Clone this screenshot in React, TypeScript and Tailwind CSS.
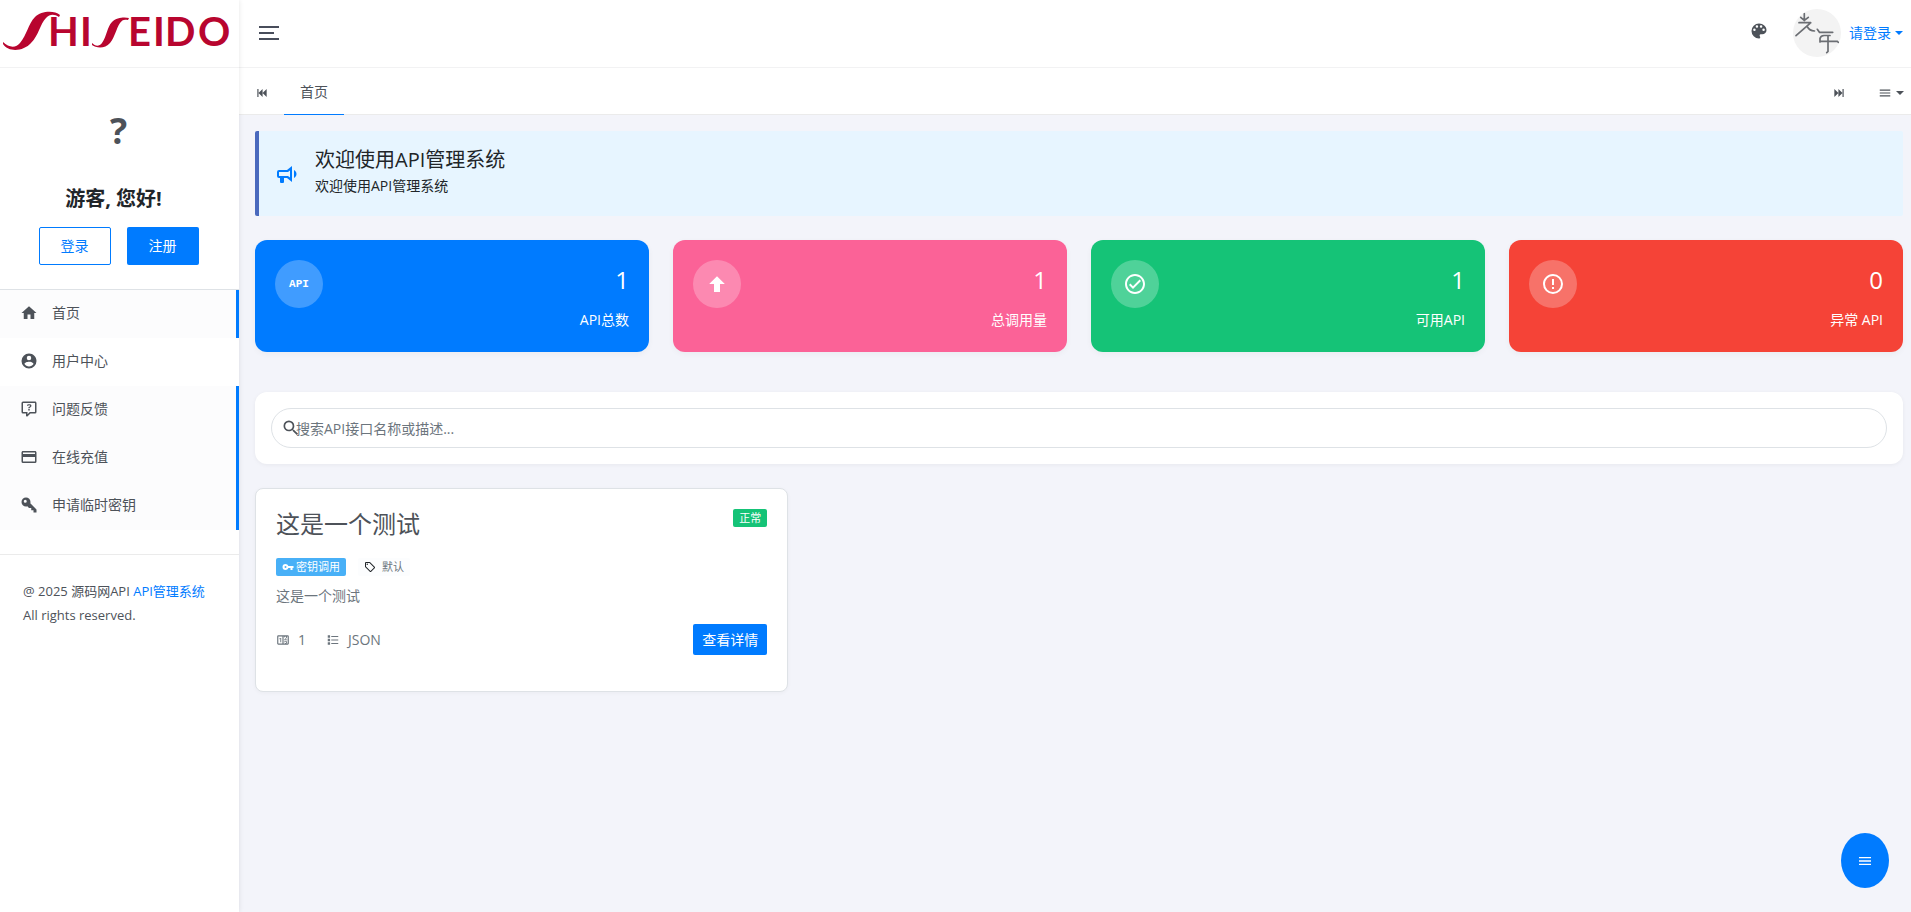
import React, { useState } from 'react';
import clsx from 'clsx';

type IconProps = {
  path: string;
  className?: string;
};

type MenuItem = {
  label: string;
  href: string;
  icon: string;
  highlighted: boolean;
};

type Stat = {
  label: string;
  value: number;
  color: string;
  icon?: string;
};

type ApiItem = {
  name: string;
  description: string;
  status: string;
  auth: string;
  category: string;
  calls: number;
  format: string;
};

const icons = {
  home: 'M10,20V14H14V20H19V12H22L12,3L2,12H5V20H10Z',
  account:
    'M12,19.2C9.5,19.2 7.29,17.92 6,16C6.03,14 10,12.9 12,12.9C14,12.9 17.97,14 18,16C16.71,17.92 14.5,19.2 12,19.2M12,5A3,3 0 0,1 15,8A3,3 0 0,1 12,11A3,3 0 0,1 9,8A3,3 0 0,1 12,5M12,2A10,10 0 0,0 2,12A10,10 0 0,0 12,22A10,10 0 0,0 22,12C22,6.47 17.5,2 12,2Z',
  question:
    'M4,2A2,2 0 0,0 2,4V16A2,2 0 0,0 4,18H8V21A1,1 0 0,0 9,22H9.5V22C9.75,22 10,21.9 10.2,21.71L13.9,18H20A2,2 0 0,0 22,16V4C22,2.89 21.1,2 20,2H4M4,4H20V16H13.08L10,19.08V16H4V4M12.19,5.5C11.3,5.5 10.59,5.68 10.05,6.04C9.5,6.4 9.22,7 9.27,7.69H11.24C11.24,7.41 11.34,7.2 11.5,7.06C11.7,6.92 11.92,6.85 12.19,6.85C12.5,6.85 12.77,6.93 12.95,7.11C13.13,7.28 13.22,7.5 13.22,7.8C13.22,8.08 13.14,8.33 13,8.54C12.83,8.76 12.62,8.94 12.36,9.08C11.84,9.4 11.5,9.68 11.29,9.92C11.1,10.16 11,10.5 11,11H13C13,10.72 13.05,10.5 13.14,10.32C13.23,10.15 13.4,10 13.66,9.85C14.12,9.64 14.5,9.36 14.79,9C15.08,8.63 15.23,8.24 15.23,7.8C15.23,7.1 14.96,6.54 14.42,6.12C13.88,5.71 13.13,5.5 12.19,5.5M11,12V14H13V12H11Z',
  card: 'M20,8H4V6H20M20,18H4V12H20M20,4H4C2.89,4 2,4.89 2,6V18A2,2 0 0,0 4,20H20A2,2 0 0,0 22,18V6C22,4.89 21.1,4 20,4Z',
  key: 'M22,18V22H18V19H15V16H12L9.74,13.74C9.19,13.91 8.61,14 8,14A6,6 0 0,1 2,8A6,6 0 0,1 8,2A6,6 0 0,1 14,8C14,8.61 13.91,9.19 13.74,9.74L22,18M7,5A2,2 0 0,0 5,7A2,2 0 0,0 7,9A2,2 0 0,0 9,7A2,2 0 0,0 7,5Z',
  keyFlat:
    'M7,14A2,2 0 0,1 5,12A2,2 0 0,1 7,10A2,2 0 0,1 9,12A2,2 0 0,1 7,14M12.65,10C11.83,7.67 9.61,6 7,6A6,6 0 0,0 1,12A6,6 0 0,0 7,18C9.61,18 11.83,16.33 12.65,14H17V18H21V14H23V10H12.65Z',
  palette:
    'M17.5,12A1.5,1.5 0 0,1 16,10.5A1.5,1.5 0 0,1 17.5,9A1.5,1.5 0 0,1 19,10.5A1.5,1.5 0 0,1 17.5,12M14.5,8A1.5,1.5 0 0,1 13,6.5A1.5,1.5 0 0,1 14.5,5A1.5,1.5 0 0,1 16,6.5A1.5,1.5 0 0,1 14.5,8M9.5,8A1.5,1.5 0 0,1 8,6.5A1.5,1.5 0 0,1 9.5,5A1.5,1.5 0 0,1 11,6.5A1.5,1.5 0 0,1 9.5,8M6.5,12A1.5,1.5 0 0,1 5,10.5A1.5,1.5 0 0,1 6.5,9A1.5,1.5 0 0,1 8,10.5A1.5,1.5 0 0,1 6.5,12M12,3A9,9 0 0,0 3,12A9,9 0 0,0 12,21A1.5,1.5 0 0,0 13.5,19.5C13.5,19.11 13.35,18.76 13.11,18.5C12.88,18.23 12.73,17.88 12.73,17.5A1.5,1.5 0 0,1 14.23,16H16A5,5 0 0,0 21,11C21,6.58 16.97,3 12,3Z',
  skipBackward: 'M20,5V19L13,12M6,5V19H4V5M13,5V19L6,12',
  skipForward: 'M4,5V19L11,12M18,5V19H20V5M11,5V19L18,12',
  menu: 'M3,6H21V8H3V6M3,11H21V13H3V11M3,16H21V18H3V16Z',
  bullhorn:
    'M12,8H4A2,2 0 0,0 2,10V14A2,2 0 0,0 4,16H5V20A1,1 0 0,0 6,21H8A1,1 0 0,0 9,20V16H12L17,20V4L12,8M15,15.6L13,14H4V10H13L15,8.4V15.6M21.5,12C21.5,13.71 20.54,15.26 19,16V8C20.53,8.75 21.5,10.3 21.5,12Z',
  arrowUp: 'M15,20H9V12H4.16L12,4.16L19.84,12H15V20Z',
  check:
    'M12 2C6.5 2 2 6.5 2 12S6.5 22 12 22 22 17.5 22 12 17.5 2 12 2M12 20C7.59 20 4 16.41 4 12S7.59 4 12 4 20 7.59 20 12 16.41 20 12 20M16.59 7.58L10 14.17L7.41 11.59L6 13L10 17L18 9L16.59 7.58Z',
  alert:
    'M11,15H13V17H11V15M11,7H13V13H11V7M12,2C6.47,2 2,6.5 2,12A10,10 0 0,0 12,22A10,10 0 0,0 22,12A10,10 0 0,0 12,2M12,20A8,8 0 0,1 4,12A8,8 0 0,1 12,4A8,8 0 0,1 20,12A8,8 0 0,1 12,20Z',
  magnify:
    'M9.5,3A6.5,6.5 0 0,1 16,9.5C16,11.11 15.41,12.59 14.44,13.73L14.71,14H15.5L20.5,19L19,20.5L14,15.5V14.71L13.73,14.44C12.59,15.41 11.11,16 9.5,16A6.5,6.5 0 0,1 3,9.5A6.5,6.5 0 0,1 9.5,3M9.5,5C7,5 5,7 5,9.5C5,12 7,14 9.5,14C12,14 14,12 14,9.5C14,7 12,5 9.5,5Z',
  tag: 'M21.41 11.58L12.41 2.58A2 2 0 0 0 11 2H4A2 2 0 0 0 2 4V11A2 2 0 0 0 2.59 12.42L11.59 21.42A2 2 0 0 0 13 22A2 2 0 0 0 14.41 21.41L21.41 14.41A2 2 0 0 0 22 13A2 2 0 0 0 21.41 11.58M13 20L4 11V4H11L20 13M6.5 5A1.5 1.5 0 1 1 5 6.5A1.5 1.5 0 0 1 6.5 5Z',
  counter:
    'M4,4H20A2,2 0 0,1 22,6V18A2,2 0 0,1 20,20H4A2,2 0 0,1 2,18V6A2,2 0 0,1 4,4M4,6V18H11V6H4M20,18V6H18.76C19,6.54 18.95,7.07 18.95,7.13C18.88,7.8 18.41,8.5 18.24,8.75L15.91,11.3L19.23,11.28L19.24,12.5L14.04,12.47L14,11.47C14,11.47 17.05,8.24 17.2,7.95C17.34,7.67 17.91,6 16.5,6C15.27,6.05 15.41,7.3 15.41,7.3L13.87,7.31C13.87,7.31 13.88,6.65 14.25,6H13V18H15.58L15.57,17.14L16.54,17.13C16.54,17.13 17.45,16.97 17.46,16.08C17.5,15.08 16.65,15.08 16.5,15.08C16.37,15.08 15.43,15.13 15.43,15.95H13.91C13.91,15.95 13.95,13.89 16.5,13.89C19.1,13.89 18.96,15.91 18.96,15.91C18.96,15.91 19,17.16 17.85,17.63L18.37,18H20M8.92,16H7.42V10.2L5.62,10.76V9.53L8.76,8.41H8.92V16Z',
  list: 'M3,4H7V8H3V4M9,5V7H21V5H9M3,10H7V14H3V10M9,11V13H21V11H9M3,16H7V20H3V16M9,17V19H21V17H9',
};

const menuItems: MenuItem[] = [
  { label: '首页', href: '#home', icon: icons.home, highlighted: true },
  { label: '用户中心', href: '#user', icon: icons.account, highlighted: false },
  { label: '问题反馈', href: '#feedback', icon: icons.question, highlighted: true },
  { label: '在线充值', href: '#recharge', icon: icons.card, highlighted: true },
  { label: '申请临时密钥', href: '#key', icon: icons.key, highlighted: true },
];

const stats: Stat[] = [
  { label: 'API总数', value: 1, color: 'bg-[#007bff]' },
  { label: '总调用量', value: 1, color: 'bg-[#fb6297]', icon: icons.arrowUp },
  { label: '可用API', value: 1, color: 'bg-[#15c377]', icon: icons.check },
  { label: '异常 API', value: 0, color: 'bg-[#f54337]', icon: icons.alert },
];

const apis: ApiItem[] = [
  {
    name: '这是一个测试',
    description: '这是一个测试',
    status: '正常',
    auth: '密钥调用',
    category: '默认',
    calls: 1,
    format: 'JSON',
  },
];

const Icon: React.FC<IconProps> = ({ path, className = 'size-4' }) => (
  <svg viewBox="0 0 24 24" fill="currentColor" aria-hidden="true" className={clsx('shrink-0', className)}>
    <path d={path} />
  </svg>
);

const Caret = () => (
  <span className="border-x-4 border-t-4 border-x-transparent border-t-current" aria-hidden="true" />
);

const Logo = () => (
  <svg viewBox="0 0 239 67" className="h-[67px] w-full" role="img" aria-label="SHISEIDO">
    <g fill="#b8052f">
      <path d="M3,42 C9,48 16,48 20,43 C27,35 28,24 35,17 C41,11 54,10 60,15 L59,17 C54,14 50,14 46,18 C40,24 39,35 31,43 C24,51 9,53 3,44 Z" />
      <path d="M92,43 C95,46 99,47 102,43 C107,36 107,27 112,22 C117,17 125,17 129,18 L128,20 C124,19 122,20 120,23 C116,29 115,37 110,43 C105,49 96,48 92,45 Z" />
      <g fontFamily="Lato, sans-serif" fontWeight="700" fontSize="40">
        <text x="48" y="46">H</text>
        <text x="80" y="46">I</text>
        <text x="128" y="46">E</text>
        <text x="153" y="46">I</text>
        <text x="165" y="46">D</text>
        <text x="198" y="46">O</text>
      </g>
    </g>
  </svg>
);

const Avatar = () => (
  <svg viewBox="0 0 48 48" className="size-12 rounded-full bg-[#f3f3f3]" aria-hidden="true">
    <g fill="none" stroke="#6b6e73" strokeWidth="1.7" strokeLinecap="round">
      <path d="M11.3,4.5 V11.5 M7.7,8.3 L11.3,11.5 L15.3,8.3 M6,13.7 H17.7 M17,14.3 L3,26.7 M14.5,18 Q16.5,21.8 21.5,22" />
      <path d="M24.3,20.3 L26.5,23.3 H39.7 M27,33 V29.5 Q27.5,26.8 31,26.5 H37 M27,32.3 H44.3 L45.5,33.5 M35,26.5 V42.5 L33.7,43.7" />
    </g>
  </svg>
);

const Sidebar = () => (
  <aside className="z-10 flex w-[239px] shrink-0 flex-col bg-white shadow-[0_0_5px_rgba(0,0,0,0.1)]">
    <a href="#home" className="block border-b border-[#f2f2f3]">
      <Logo />
    </a>

    <div className="flex flex-col items-center border-b border-[#dee2e6] pt-10 pr-0.5 pb-6">
      <span className="text-4xl leading-[46px] font-bold text-[#4d5259]">?</span>
      <h2 className="mt-[33px] mr-2.5 text-xl leading-6 font-bold text-[#212529]">游客, 您好!</h2>
      <div className="mt-4 flex gap-4">
        <button type="button" className="h-[38px] w-[72px] rounded-xs border border-[#007bff] text-sm text-[#007bff]">
          登录
        </button>
        <button type="button" className="h-[38px] w-[72px] rounded-xs bg-[#007bff] text-sm text-white">
          注册
        </button>
      </div>
    </div>

    <nav className="mb-6 flex flex-col">
      {menuItems.map((item) => (
        <a
          key={item.href}
          href={item.href}
          className={clsx(
            'flex h-12 items-center gap-3.5 border-r-3 pb-0.5 pl-5 text-sm',
            item.highlighted ? 'border-[#007bff] bg-[#fcfcfd]' : 'border-transparent',
          )}
        >
          <Icon path={item.icon} className="size-[18px]" />
          {item.label}
        </a>
      ))}
    </nav>

    <p className="border-t border-[#ebebeb] px-[23px] pt-6 text-[13px] leading-6">
      @ 2025 源码网API{' '}
      <a href="#system" className="text-[#007bff]">
        API管理系统
      </a>
      <br />
      All rights reserved.
    </p>
  </aside>
);

const Header = () => (
  <header className="flex h-[68px] items-center border-b border-[#f2f2f3] bg-white pr-2 pb-0.5 pl-5">
    <button type="button" aria-label="折叠菜单" className="flex flex-col gap-1">
      <span className="h-0.5 w-5 bg-[#484d5b]" />
      <span className="h-0.5 w-[15px] bg-[#484d5b]" />
      <span className="h-0.5 w-5 bg-[#484d5b]" />
    </button>
    <div className="ml-auto flex items-center">
      <button type="button" aria-label="主题" className="mr-6 pb-1">
        <Icon path={icons.palette} className="size-5" />
      </button>
      <a href="#login" className="flex items-center text-sm text-[#007bff]">
        <Avatar />
        <span className="mr-1 ml-2">请登录</span>
        <Caret />
      </a>
    </div>
  </header>
);

const TabBar = () => (
  <div className="flex h-[47px] items-center border-b border-[#ebebeb] bg-white pr-[7px] pl-4">
    <button type="button" aria-label="向左" className="mr-[15px] pt-1">
      <Icon path={icons.skipBackward} className="size-3.5" />
    </button>
    <a
      href="#home"
      className="-mb-px flex h-[47px] w-[60px] items-center justify-center border-b border-[#007bff] pt-0.5 text-sm"
    >
      首页
    </a>
    <button type="button" aria-label="向右" className="mr-8 ml-auto pt-1">
      <Icon path={icons.skipForward} className="size-3.5" />
    </button>
    <button type="button" aria-label="标签操作" className="flex items-center gap-1 pt-1">
      <Icon path={icons.menu} className="size-3.5" />
      <Caret />
    </button>
  </div>
);

const Banner = () => (
  <section className="flex items-center gap-4 rounded-xs border-l-4 border-[#4a69bd] bg-[#e7f5ff] py-3 pl-4 text-[#212529]">
    <Icon path={icons.bullhorn} className="size-6 text-[#007bff]" />
    <div>
      <h1 className="pt-px text-xl leading-8">欢迎使用API管理系统</h1>
      <p className="mb-2 text-sm leading-5">欢迎使用API管理系统</p>
    </div>
  </section>
);

const StatCard: React.FC<{ stat: Stat }> = ({ stat }) => (
  <div
    className={clsx(
      'flex h-28 justify-between rounded-xl p-5 text-white shadow-[0_2px_6px_rgba(0,0,0,0.04)]',
      stat.color,
    )}
  >
    <span className="flex size-12 items-center justify-center rounded-full bg-white/25">
      {stat.icon ? (
        <Icon path={stat.icon} className="size-6" />
      ) : (
        <span className="font-['Liberation_Mono',monospace] text-[11px] font-bold">API</span>
      )}
    </span>
    <div className="text-right">
      <p className="text-2xl leading-10">{stat.value}</p>
      <p className="mt-2 text-sm leading-6">{stat.label}</p>
    </div>
  </div>
);

const ApiCard: React.FC<{ api: ApiItem }> = ({ api }) => (
  <article className="rounded-lg border border-[#dee2e6] bg-white px-5 pt-5 pb-9 shadow-[0_1px_4px_rgba(0,0,0,0.04)]">
    <div className="flex items-start justify-between">
      <h3 className="text-2xl leading-[30px]">{api.name}</h3>
      <span className="rounded-xs bg-[#15c377] px-1.5 text-[11px] leading-[18px] text-white">{api.status}</span>
    </div>
    <div className="mt-[19px] flex gap-3 text-[11px] leading-[18px]">
      <span className="flex items-center gap-0.5 rounded-xs bg-[#48b0f7] px-1.5 text-white">
        <Icon path={icons.keyFlat} className="size-3" />
        {api.auth}
      </span>
      <span className="flex items-center gap-1.5 rounded-xs bg-[#fcfdfe] px-1.5 text-[#6c757d]">
        <Icon path={icons.tag} className="size-3 text-[#212529]" />
        {api.category}
      </span>
    </div>
    <p className="mt-[9px] text-sm leading-[22px] text-[#6c757d]">{api.description}</p>
    <div className="mt-[17px] flex items-center text-sm text-[#6c757d]">
      <Icon path={icons.counter} className="mr-2 size-3.5" />
      {api.calls}
      <Icon path={icons.list} className="mr-2 ml-5 size-3.5" />
      {api.format}
      <button type="button" className="ml-auto h-[31px] rounded-xs bg-[#007bff] px-[9px] text-sm text-white">
        查看详情
      </button>
    </div>
  </article>
);

const App: React.FC = () => {
  const [keyword, setKeyword] = useState('');
  const visible = apis.filter((api) => api.name.includes(keyword) || api.description.includes(keyword));

  return (
    <div className="flex min-h-screen bg-[#f3f4fa] font-['Open_Sans','Noto_Sans_CJK_SC',sans-serif] text-[#4d5259]">
      <Sidebar />

      <div className="min-w-0 flex-1">
        <Header />
        <TabBar />

        <main className="pt-4 pr-2 pl-4">
          <Banner />

          <section className="mt-6 grid grid-cols-4 gap-6">
            {stats.map((stat) => (
              <StatCard key={stat.label} stat={stat} />
            ))}
          </section>

          {/* Search */}
          <form
            className="mt-10 rounded-xl bg-white p-4 shadow-[0_1px_4px_rgba(0,0,0,0.05)]"
            onSubmit={(e) => e.preventDefault()}
          >
            <label className="relative block">
              <span className="absolute top-2.5 left-2.5">
                <Icon path={icons.magnify} className="size-5" />
              </span>
              <input
                type="text"
                aria-label="搜索API"
                value={keyword}
                onChange={(e) => setKeyword(e.target.value)}
                placeholder="搜索API接口名称或描述..."
                className="block h-10 w-full rounded-full border border-[#dee2e6] pl-6 text-sm outline-none placeholder:text-[#6c757d]"
              />
            </label>
          </form>

          <section className="mt-6 grid grid-cols-3 gap-6">
            {visible.map((api) => (
              <ApiCard key={api.name} api={api} />
            ))}
          </section>
        </main>
      </div>

      {/* Floating menu button */}
      <button
        type="button"
        aria-label="菜单"
        className="fixed right-[22px] bottom-6 flex h-[55px] w-12 items-center justify-center rounded-[50%] bg-[#007bff] text-white"
      >
        <Icon path={icons.menu} className="size-4" />
      </button>
    </div>
  );
};

export default App;
